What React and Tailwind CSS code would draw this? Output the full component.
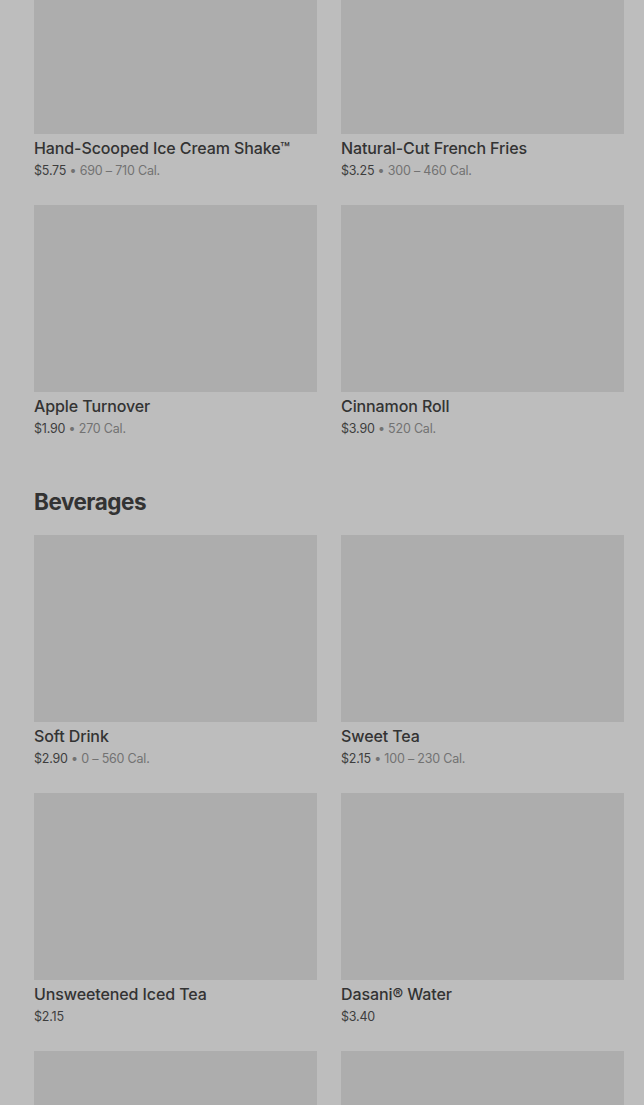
import React from "react";

const row1 = [
  { name: "Hand-Scooped Ice Cream Shake™", price: "$5.75", cal: "690 – 710 Cal." },
  { name: "Natural-Cut French Fries", price: "$3.25", cal: "300 – 460 Cal." },
  { name: "Apple Turnover", price: "$1.90", cal: "270 Cal." },
  { name: "Cinnamon Roll", price: "$3.90", cal: "520 Cal." },
];

const bev = [
  { name: "Soft Drink", price: "$2.90", cal: "0 – 560 Cal." },
  { name: "Sweet Tea", price: "$2.15", cal: "100 – 230 Cal." },
  { name: "Unsweetened Iced Tea", price: "$2.15" },
  { name: "Dasani® Water", price: "$3.40" },
  { name: "", price: "" },
  { name: "", price: "" },
];

function Card({ item }) {
  return (
    <div className="flex flex-col">
      <div className="h-[187px] bg-[#adadad]" />
      <div className="pt-[2px] text-[16px] leading-6 font-medium text-[#333333] tracking-[-0.1px]">
        {item.name}
      </div>
      <div className="mt-[1px] text-[12.5px] leading-5 text-[#3d3d3d] tracking-[-0.2px]">
        {item.price}
        {item.cal && <span className="text-[#727272]"> • {item.cal}</span>}
      </div>
    </div>
  );
}

export default function App() {
  return (
    <div
      className="h-[1105px] overflow-hidden bg-[#bdbdbd]"
      style={{ fontFamily: "Inter, 'Noto Sans', sans-serif" }}
    >
      <div className="-mt-[53px] pl-[34px] pr-[20px]">
        <div className="grid grid-cols-2 gap-x-6 gap-y-6">
          {row1.map((it, i) => (
            <Card key={i} item={it} />
          ))}
        </div>
        <h2 className="mt-[47px] mb-[17px] text-[22.5px] leading-8 font-bold text-[#333333] tracking-[-0.5px]">
          Beverages
        </h2>
        <div className="grid grid-cols-2 gap-x-6 gap-y-6">
          {bev.map((it, i) => (
            <Card key={i} item={it} />
          ))}
        </div>
      </div>
    </div>
  );
}
